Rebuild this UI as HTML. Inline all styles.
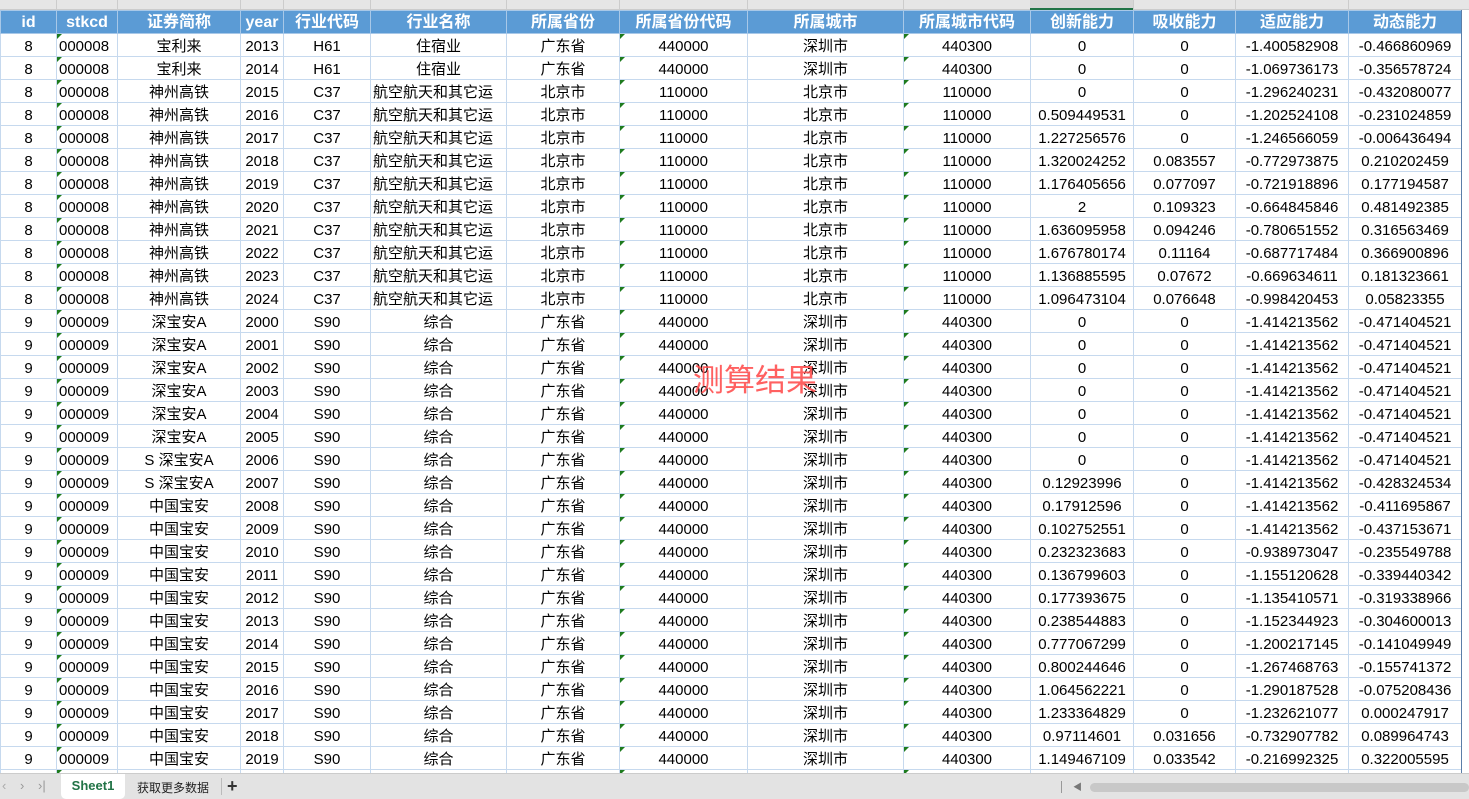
<!DOCTYPE html>
<html><head><meta charset="utf-8"><style>
*{margin:0;padding:0;box-sizing:border-box}
body{width:1469px;height:799px;overflow:hidden;background:#fff;font-family:"Liberation Sans","Noto Sans CJK SC",sans-serif;position:relative}
.colhdr{position:absolute;left:0;top:0;width:1469px;height:10px;background:#e6e6e6;border-bottom:1px solid #ccc}
.colhdr i{position:absolute;top:0;height:10px;border-left:1px solid #ccc}
table{position:absolute;left:0;top:10px;border-collapse:collapse;table-layout:fixed;width:1461px}
tr{height:23px}
td{height:23px;line-height:18px;padding:3px 2px 0 2px;border:1px solid #c6d9ee;font-size:15px;text-align:center;color:#000;white-space:nowrap;overflow:hidden;font-family:"Liberation Sans","Noto Sans CJK SC",sans-serif}
tr.h td{background:#5b9bd5;color:#fff;font-weight:bold;font-size:16px;line-height:18px;padding:2px 2px 0 2px;border-color:#a8c8e8}
td.s{text-align:left;position:relative}
td.g{position:relative}
td.g:before,td.s:before{content:"";position:absolute;left:0;top:0;border-top:5px solid #1e7b1e;border-right:5px solid transparent}
.bar{position:absolute;left:0;top:773px;width:1469px;height:26px;background:#e3e3e3;border-top:1px solid #ccc;font-size:13px}
.wm{position:absolute;left:693px;top:355px;font-size:31px;color:#ff5050;font-family:"Noto Sans CJK SC",sans-serif;opacity:.9}
.vline{position:absolute;left:1461px;top:10px;width:1px;height:763px;background:#5b7ea8}
</style></head><body>
<div class="colhdr"><i style="left:56px"></i><i style="left:117px"></i><i style="left:240px"></i><i style="left:283px"></i><i style="left:370px"></i><i style="left:506px"></i><i style="left:619px"></i><i style="left:747px"></i><i style="left:903px"></i><i style="left:1030px"></i><i style="left:1133px"></i><i style="left:1235px"></i><i style="left:1348px"></i><div style="position:absolute;left:1030px;width:103px;top:0;height:10px;background:#d6d6d6;border-bottom:2px solid #217346"></div></div>
<table>
<colgroup><col style="width:56px"><col style="width:61px"><col style="width:123px"><col style="width:43px"><col style="width:87px"><col style="width:136px"><col style="width:113px"><col style="width:128px"><col style="width:156px"><col style="width:127px"><col style="width:103px"><col style="width:102px"><col style="width:113px"><col style="width:113px"></colgroup>
<tr class="h"><td>id</td><td>stkcd</td><td>证券简称</td><td>year</td><td>行业代码</td><td>行业名称</td><td>所属省份</td><td>所属省份代码</td><td>所属城市</td><td>所属城市代码</td><td>创新能力</td><td>吸收能力</td><td>适应能力</td><td>动态能力</td></tr>
<tr><td>8</td><td class="s">000008</td><td>宝利来</td><td>2013</td><td>H61</td><td>住宿业</td><td>广东省</td><td class="g">440000</td><td>深圳市</td><td class="g">440300</td><td>0</td><td>0</td><td>-1.400582908</td><td>-0.466860969</td></tr>
<tr><td>8</td><td class="s">000008</td><td>宝利来</td><td>2014</td><td>H61</td><td>住宿业</td><td>广东省</td><td class="g">440000</td><td>深圳市</td><td class="g">440300</td><td>0</td><td>0</td><td>-1.069736173</td><td>-0.356578724</td></tr>
<tr><td>8</td><td class="s">000008</td><td>神州高铁</td><td>2015</td><td>C37</td><td style="text-align:left">航空航天和其它运</td><td>北京市</td><td class="g">110000</td><td>北京市</td><td class="g">110000</td><td>0</td><td>0</td><td>-1.296240231</td><td>-0.432080077</td></tr>
<tr><td>8</td><td class="s">000008</td><td>神州高铁</td><td>2016</td><td>C37</td><td style="text-align:left">航空航天和其它运</td><td>北京市</td><td class="g">110000</td><td>北京市</td><td class="g">110000</td><td>0.509449531</td><td>0</td><td>-1.202524108</td><td>-0.231024859</td></tr>
<tr><td>8</td><td class="s">000008</td><td>神州高铁</td><td>2017</td><td>C37</td><td style="text-align:left">航空航天和其它运</td><td>北京市</td><td class="g">110000</td><td>北京市</td><td class="g">110000</td><td>1.227256576</td><td>0</td><td>-1.246566059</td><td>-0.006436494</td></tr>
<tr><td>8</td><td class="s">000008</td><td>神州高铁</td><td>2018</td><td>C37</td><td style="text-align:left">航空航天和其它运</td><td>北京市</td><td class="g">110000</td><td>北京市</td><td class="g">110000</td><td>1.320024252</td><td>0.083557</td><td>-0.772973875</td><td>0.210202459</td></tr>
<tr><td>8</td><td class="s">000008</td><td>神州高铁</td><td>2019</td><td>C37</td><td style="text-align:left">航空航天和其它运</td><td>北京市</td><td class="g">110000</td><td>北京市</td><td class="g">110000</td><td>1.176405656</td><td>0.077097</td><td>-0.721918896</td><td>0.177194587</td></tr>
<tr><td>8</td><td class="s">000008</td><td>神州高铁</td><td>2020</td><td>C37</td><td style="text-align:left">航空航天和其它运</td><td>北京市</td><td class="g">110000</td><td>北京市</td><td class="g">110000</td><td>2</td><td>0.109323</td><td>-0.664845846</td><td>0.481492385</td></tr>
<tr><td>8</td><td class="s">000008</td><td>神州高铁</td><td>2021</td><td>C37</td><td style="text-align:left">航空航天和其它运</td><td>北京市</td><td class="g">110000</td><td>北京市</td><td class="g">110000</td><td>1.636095958</td><td>0.094246</td><td>-0.780651552</td><td>0.316563469</td></tr>
<tr><td>8</td><td class="s">000008</td><td>神州高铁</td><td>2022</td><td>C37</td><td style="text-align:left">航空航天和其它运</td><td>北京市</td><td class="g">110000</td><td>北京市</td><td class="g">110000</td><td>1.676780174</td><td>0.11164</td><td>-0.687717484</td><td>0.366900896</td></tr>
<tr><td>8</td><td class="s">000008</td><td>神州高铁</td><td>2023</td><td>C37</td><td style="text-align:left">航空航天和其它运</td><td>北京市</td><td class="g">110000</td><td>北京市</td><td class="g">110000</td><td>1.136885595</td><td>0.07672</td><td>-0.669634611</td><td>0.181323661</td></tr>
<tr><td>8</td><td class="s">000008</td><td>神州高铁</td><td>2024</td><td>C37</td><td style="text-align:left">航空航天和其它运</td><td>北京市</td><td class="g">110000</td><td>北京市</td><td class="g">110000</td><td>1.096473104</td><td>0.076648</td><td>-0.998420453</td><td>0.05823355</td></tr>
<tr><td>9</td><td class="s">000009</td><td>深宝安A</td><td>2000</td><td>S90</td><td>综合</td><td>广东省</td><td class="g">440000</td><td>深圳市</td><td class="g">440300</td><td>0</td><td>0</td><td>-1.414213562</td><td>-0.471404521</td></tr>
<tr><td>9</td><td class="s">000009</td><td>深宝安A</td><td>2001</td><td>S90</td><td>综合</td><td>广东省</td><td class="g">440000</td><td>深圳市</td><td class="g">440300</td><td>0</td><td>0</td><td>-1.414213562</td><td>-0.471404521</td></tr>
<tr><td>9</td><td class="s">000009</td><td>深宝安A</td><td>2002</td><td>S90</td><td>综合</td><td>广东省</td><td class="g">440000</td><td>深圳市</td><td class="g">440300</td><td>0</td><td>0</td><td>-1.414213562</td><td>-0.471404521</td></tr>
<tr><td>9</td><td class="s">000009</td><td>深宝安A</td><td>2003</td><td>S90</td><td>综合</td><td>广东省</td><td class="g">440000</td><td>深圳市</td><td class="g">440300</td><td>0</td><td>0</td><td>-1.414213562</td><td>-0.471404521</td></tr>
<tr><td>9</td><td class="s">000009</td><td>深宝安A</td><td>2004</td><td>S90</td><td>综合</td><td>广东省</td><td class="g">440000</td><td>深圳市</td><td class="g">440300</td><td>0</td><td>0</td><td>-1.414213562</td><td>-0.471404521</td></tr>
<tr><td>9</td><td class="s">000009</td><td>深宝安A</td><td>2005</td><td>S90</td><td>综合</td><td>广东省</td><td class="g">440000</td><td>深圳市</td><td class="g">440300</td><td>0</td><td>0</td><td>-1.414213562</td><td>-0.471404521</td></tr>
<tr><td>9</td><td class="s">000009</td><td>S 深宝安A</td><td>2006</td><td>S90</td><td>综合</td><td>广东省</td><td class="g">440000</td><td>深圳市</td><td class="g">440300</td><td>0</td><td>0</td><td>-1.414213562</td><td>-0.471404521</td></tr>
<tr><td>9</td><td class="s">000009</td><td>S 深宝安A</td><td>2007</td><td>S90</td><td>综合</td><td>广东省</td><td class="g">440000</td><td>深圳市</td><td class="g">440300</td><td>0.12923996</td><td>0</td><td>-1.414213562</td><td>-0.428324534</td></tr>
<tr><td>9</td><td class="s">000009</td><td>中国宝安</td><td>2008</td><td>S90</td><td>综合</td><td>广东省</td><td class="g">440000</td><td>深圳市</td><td class="g">440300</td><td>0.17912596</td><td>0</td><td>-1.414213562</td><td>-0.411695867</td></tr>
<tr><td>9</td><td class="s">000009</td><td>中国宝安</td><td>2009</td><td>S90</td><td>综合</td><td>广东省</td><td class="g">440000</td><td>深圳市</td><td class="g">440300</td><td>0.102752551</td><td>0</td><td>-1.414213562</td><td>-0.437153671</td></tr>
<tr><td>9</td><td class="s">000009</td><td>中国宝安</td><td>2010</td><td>S90</td><td>综合</td><td>广东省</td><td class="g">440000</td><td>深圳市</td><td class="g">440300</td><td>0.232323683</td><td>0</td><td>-0.938973047</td><td>-0.235549788</td></tr>
<tr><td>9</td><td class="s">000009</td><td>中国宝安</td><td>2011</td><td>S90</td><td>综合</td><td>广东省</td><td class="g">440000</td><td>深圳市</td><td class="g">440300</td><td>0.136799603</td><td>0</td><td>-1.155120628</td><td>-0.339440342</td></tr>
<tr><td>9</td><td class="s">000009</td><td>中国宝安</td><td>2012</td><td>S90</td><td>综合</td><td>广东省</td><td class="g">440000</td><td>深圳市</td><td class="g">440300</td><td>0.177393675</td><td>0</td><td>-1.135410571</td><td>-0.319338966</td></tr>
<tr><td>9</td><td class="s">000009</td><td>中国宝安</td><td>2013</td><td>S90</td><td>综合</td><td>广东省</td><td class="g">440000</td><td>深圳市</td><td class="g">440300</td><td>0.238544883</td><td>0</td><td>-1.152344923</td><td>-0.304600013</td></tr>
<tr><td>9</td><td class="s">000009</td><td>中国宝安</td><td>2014</td><td>S90</td><td>综合</td><td>广东省</td><td class="g">440000</td><td>深圳市</td><td class="g">440300</td><td>0.777067299</td><td>0</td><td>-1.200217145</td><td>-0.141049949</td></tr>
<tr><td>9</td><td class="s">000009</td><td>中国宝安</td><td>2015</td><td>S90</td><td>综合</td><td>广东省</td><td class="g">440000</td><td>深圳市</td><td class="g">440300</td><td>0.800244646</td><td>0</td><td>-1.267468763</td><td>-0.155741372</td></tr>
<tr><td>9</td><td class="s">000009</td><td>中国宝安</td><td>2016</td><td>S90</td><td>综合</td><td>广东省</td><td class="g">440000</td><td>深圳市</td><td class="g">440300</td><td>1.064562221</td><td>0</td><td>-1.290187528</td><td>-0.075208436</td></tr>
<tr><td>9</td><td class="s">000009</td><td>中国宝安</td><td>2017</td><td>S90</td><td>综合</td><td>广东省</td><td class="g">440000</td><td>深圳市</td><td class="g">440300</td><td>1.233364829</td><td>0</td><td>-1.232621077</td><td>0.000247917</td></tr>
<tr><td>9</td><td class="s">000009</td><td>中国宝安</td><td>2018</td><td>S90</td><td>综合</td><td>广东省</td><td class="g">440000</td><td>深圳市</td><td class="g">440300</td><td>0.97114601</td><td>0.031656</td><td>-0.732907782</td><td>0.089964743</td></tr>
<tr><td>9</td><td class="s">000009</td><td>中国宝安</td><td>2019</td><td>S90</td><td>综合</td><td>广东省</td><td class="g">440000</td><td>深圳市</td><td class="g">440300</td><td>1.149467109</td><td>0.033542</td><td>-0.216992325</td><td>0.322005595</td></tr>
<tr><td>9</td><td class="s">000009</td><td>中国宝安</td><td>2020</td><td>S90</td><td>综合</td><td>广东省</td><td class="g">440000</td><td>深圳市</td><td class="g">440300</td><td></td><td></td><td></td><td></td></tr>
</table>
<div class="vline"></div>
<div class="wm">测算结果</div>
<div class="bar">
<span style="position:absolute;left:2px;top:4px;color:#aaa">‹</span>
<span style="position:absolute;left:20px;top:4px;color:#999">›</span>
<span style="position:absolute;left:38px;top:4px;color:#999">›|</span>
<div style="position:absolute;left:61px;top:0;width:64px;height:25px;background:#fff;border-radius:0 0 5px 5px;color:#217346;font-weight:bold;text-align:center;line-height:24px">Sheet1</div>
<span style="position:absolute;left:137px;top:5px;color:#222;font-size:12px;font-family:'Noto Sans CJK SC',sans-serif">获取更多数据</span>
<span style="position:absolute;left:221px;top:4px;height:17px;border-left:1px solid #bbb"></span>
<span style="position:absolute;left:227px;top:2px;font-size:18px;font-weight:bold;color:#333">+</span>
<span style="position:absolute;left:1061px;top:7px;height:12px;border-left:1px solid #999"></span>
<span style="position:absolute;left:1073px;top:6px;font-size:9px;color:#777">◀</span>
<div style="position:absolute;left:1090px;top:9px;width:379px;height:9px;background:#c8c8c8;border-radius:5px"></div>
</div>
</body></html>
